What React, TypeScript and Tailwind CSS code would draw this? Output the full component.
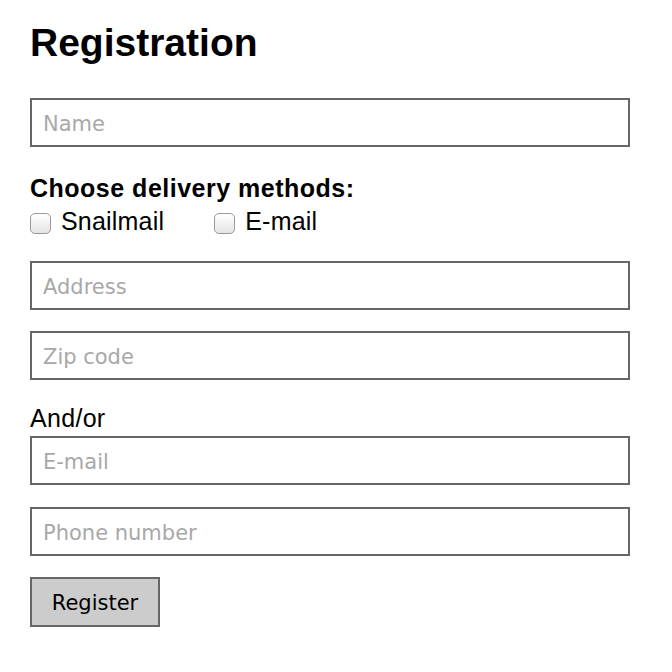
import { useState } from "react"

type FieldProps = {
    placeholder: string
    className?: string
}

function Field({ placeholder, className = "" }: FieldProps) {
    return (
        <input
            type="text"
            placeholder={placeholder}
            className={`block w-[600px] h-[49px] border-2 border-[#666666] bg-white px-[11px] pt-[3px] text-[21px] text-black placeholder:text-[#a8a8a8] outline-none font-['DejaVu_Sans',sans-serif] ${className}`}
        />
    )
}

type CheckProps = {
    label: string
}

function Check({ label }: CheckProps) {
    const [checked, setChecked] = useState(false)
    return (
        <label className="flex items-center gap-[10px] cursor-pointer">
            <input
                type="checkbox"
                checked={checked}
                onChange={() => setChecked(!checked)}
                className="appearance-none w-[21px] h-[21px] mt-[4px] rounded-[5px] border border-[#9a9a9a] bg-gradient-to-b from-white to-[#e4e4e4] shadow-[inset_0_1px_0_white] checked:from-[#6fb0f5] checked:to-[#2a7de0]"
            />
            <span>{label}</span>
        </label>
    )
}

export default function App() {
    return (
        <div className="min-h-[672px] bg-white px-[30px] pt-[21px] text-black font-['Liberation_Sans',Arial,sans-serif]">
            <h1 className="text-[39px] leading-[44px] font-bold">Registration</h1>
            <form className="flex flex-col" onSubmit={e => e.preventDefault()}>
                <Field placeholder="Name" className="mt-[33px]" />
                <p className="mt-[27px] text-[25px] leading-[28px] font-bold tracking-[0.5px]">Choose delivery methods:</p>
                <div className="mt-[5px] flex gap-[50px] text-[25px] leading-[28px] tracking-[0.2px]">
                    <Check label="Snailmail" />
                    <Check label="E-mail" />
                </div>
                <Field placeholder="Address" className="mt-[26px]" />
                <Field placeholder="Zip code" className="mt-[21px]" />
                <p className="mt-[24px] text-[25px] leading-[28px] tracking-[0.3px]">And/or</p>
                <Field placeholder="E-mail" className="mt-[4px]" />
                <Field placeholder="Phone number" className="mt-[22px]" />
                <button
                    type="submit"
                    className="mt-[21px] w-[130px] h-[50px] border-2 border-[#666666] bg-[#cccccc] pt-[3px] text-[21px] text-black font-['DejaVu_Sans',sans-serif]"
                >
                    Register
                </button>
            </form>
        </div>
    )
}
